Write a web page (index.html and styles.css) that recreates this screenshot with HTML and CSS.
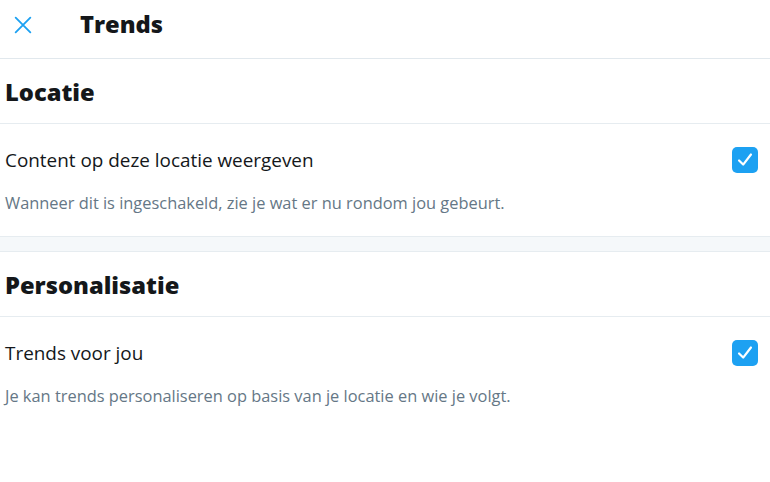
FILE: index.html
```html
<!DOCTYPE html>
<html lang="nl">
<head>
<meta charset="utf-8">
<link rel="stylesheet" href="styles.css">
</head>
<body>
<div class="page">
  <header class="topbar">
    <button class="close" aria-label="Sluiten">
      <svg viewBox="0 0 24 24" width="22" height="22"><path d="M4 4 L20 20 M20 4 L4 20" stroke="#1da1f2" stroke-width="2" stroke-linecap="round" fill="none"/></svg>
    </button>
    <h1 class="title">Trends</h1>
  </header>

  <section class="section">
    <h2 class="section-title">Locatie</h2>
    <div class="setting">
      <div class="setting-row">
        <span class="setting-label">Content op deze locatie weergeven</span>
        <span class="checkbox"><svg viewBox="0 0 24 24" width="22" height="22"><path d="M5.5 12.5 L10 17 L18.5 6" stroke="#fff" stroke-width="2.4" fill="none" stroke-linecap="round" stroke-linejoin="round"/></svg></span>
      </div>
      <p class="setting-desc">Wanneer dit is ingeschakeld, zie je wat er nu rondom jou gebeurt.</p>
    </div>
  </section>

  <div class="spacer"></div>

  <section class="section">
    <h2 class="section-title">Personalisatie</h2>
    <div class="setting">
      <div class="setting-row">
        <span class="setting-label">Trends voor jou</span>
        <span class="checkbox"><svg viewBox="0 0 24 24" width="22" height="22"><path d="M5.5 12.5 L10 17 L18.5 6" stroke="#fff" stroke-width="2.4" fill="none" stroke-linecap="round" stroke-linejoin="round"/></svg></span>
      </div>
      <p class="setting-desc">Je kan trends personaliseren op basis van je locatie en wie je volgt.</p>
    </div>
  </section>
</div>
</body>
</html>
```

FILE: styles.css
```css
* { box-sizing: border-box; }
html, body { margin: 0; padding: 0; background: #fff; }
body {
  font-family: "Open Sans", "Noto Sans", "DejaVu Sans", sans-serif;
  color: #14171a;
  width: 770px;
  height: 482px;
  overflow: hidden;
}
.topbar {
  height: 59px;
  display: flex;
  align-items: center;
  border-bottom: 1px solid #e1e8ed;
  padding-bottom: 9px;
}
.close {
  background: none;
  border: 0;
  padding: 0;
  margin-left: 12px;
  width: 22px;
  height: 22px;
  display: flex;
}
.title {
  margin: 0 0 0 46px;
  font-size: 23.7px;
  font-weight: 800;
  line-height: 1;
}
.section-title {
  margin: 0;
  height: 65px;
  display: flex;
  align-items: center;
  padding: 2px 5px 0;
  font-size: 23.7px;
  font-weight: 800;
  border-bottom: 1px solid #e6ecf0;
}
.setting { padding: 0 12px 0 5px; }
.setting-row {
  height: 72px;
  display: flex;
  align-items: center;
  justify-content: space-between;
}
.setting-label { font-size: 18.9px; }
.checkbox {
  width: 26px;
  height: 26px;
  border-radius: 5px;
  background: #1da1f2;
  display: flex;
  align-items: center;
  justify-content: center;
}
.setting-desc {
  margin: -3px 0 0;
  font-size: 16.4px;
  color: #657786;
  height: 43px;
  line-height: 20px;
}
.spacer {
  height: 16px;
  background: #f5f8fa;
  border-top: 1px solid #e6ecf0;
  border-bottom: 1px solid #e6ecf0;
}
```
